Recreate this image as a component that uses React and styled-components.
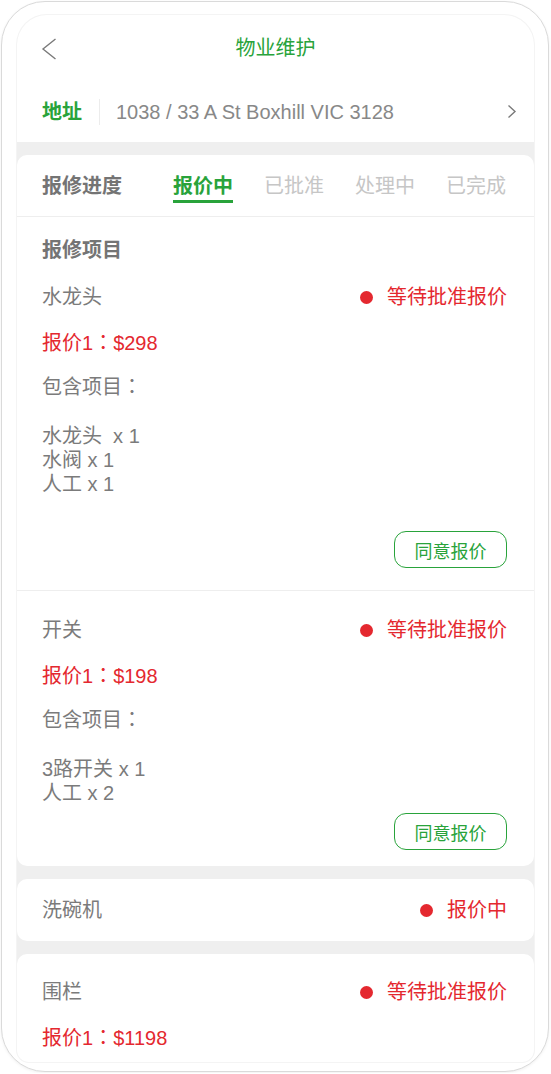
import styled, { createGlobalStyle } from "styled-components";

const GlobalStyle = createGlobalStyle`
    html, body {
        margin: 0;
        padding: 0;
        background: #ffffff;
    }
    body {
        font-family: "Liberation Sans", "Noto Sans CJK SC", sans-serif;
    }
    * {
        box-sizing: border-box;
    }
`;

const GREEN = "#29a33b";
const RED = "#e4282f";
const GREY = "#7b7b7b";

const Frame = styled.div`
    margin: 1px;
    width: 548px;
    height: 1071px;
    border: 1px solid #dadada;
    border-radius: 44px;
    box-shadow: 0 1px 3px rgba(0, 0, 0, 0.06);
    padding: 13px 14px 0 15px;
    background: #fff;
`;

const Screen = styled.div`
    width: 517px;
    height: 1047px;
    background: #efefef;
    border-radius: 30px 30px 12px 12px;
    box-shadow: 0 0 0 1px #f4f4f4;
    overflow: hidden;
`;

const Top = styled.div`
    background: #fff;
`;

const Header = styled.div`
    height: 66px;
    display: grid;
    grid-template-columns: 80px 1fr 80px;
    align-items: center;
`;

const Back = styled.div`
    padding-left: 24px;
    display: flex;
    align-items: center;
    margin-top: 1px;
`;

const Title = styled.div`
    text-align: center;
    color: ${GREEN};
    font-size: 20px;
    line-height: 24px;
`;

const AddressRow = styled.div`
    height: 61px;
    display: flex;
    align-items: center;
    padding: 0 17px 0 25px;
`;

const AddressLabel = styled.span`
    color: ${GREEN};
    font-weight: 700;
    font-size: 20px;
    line-height: 24px;
`;

const VLine = styled.div`
    width: 1px;
    height: 26px;
    background: #ececec;
    margin: 0 16px 0 17px;
`;

const AddressText = styled.span`
    flex: 1;
    color: #888;
    font-size: 20px;
    line-height: 24px;
`;

const Cards = styled.div`
    display: flex;
    flex-direction: column;
    gap: 13px;
    padding-top: 13px;
`;

const Card = styled.div`
    background: #fff;
    border-radius: 10px;
`;

const TabsRow = styled.div`
    height: 62px;
    display: flex;
    align-items: center;
    padding-left: 25px;
    border-bottom: 1px solid #eeeeee;
`;

const Heading = styled.span`
    color: #747474;
    font-weight: 700;
    font-size: 20px;
    line-height: 24px;
`;

const Tabs = styled.div`
    display: flex;
    gap: 31px;
    margin-left: 51px;
`;

const Tab = styled.span`
    position: relative;
    font-size: 20px;
    line-height: 24px;
    color: ${props => props.$active ? GREEN : "#c6c6c6"};
    font-weight: ${props => props.$active ? 700 : 400};

    &::after {
        content: "";
        display: ${props => props.$active ? "block" : "none"};
        position: absolute;
        left: 0;
        right: 0;
        top: 26px;
        height: 3px;
        background: ${GREEN};
    }
`;

const SectionTitle = styled.div`
    padding: 21px 25px 0;
`;

const Item = styled.div`
    padding: ${props => props.$top}px 27px ${props => props.$bottom}px 25px;
    border-bottom: ${props => props.$divider ? "1px solid #eeeeee" : "none"};
`;

const Row = styled.div`
    flex: 1;
    display: flex;
    align-items: center;
    justify-content: space-between;
    font-size: 20px;
    line-height: 24px;
`;

const Name = styled.span`
    color: ${GREY};
`;

const Status = styled.span`
    display: flex;
    align-items: center;
    gap: 14px;
    color: ${RED};
`;

const Dot = styled.span`
    width: 13px;
    height: 13px;
    border-radius: 50%;
    background: ${RED};
`;

const Quote = styled.div`
    margin-top: 22px;
    color: ${RED};
    font-size: 20px;
    line-height: 24px;
`;

const Included = styled.div`
    margin-top: 20px;
    color: ${GREY};
    font-size: 20px;
    line-height: 24px;
`;

// centred full-width colon, as in the reference font
const Colon = styled.span`
    font-family: "Noto Sans CJK TC", "Noto Sans CJK SC", sans-serif;
    line-height: 0;
`;

const Lines = styled.div`
    margin-top: 25px;
    color: ${GREY};
    font-size: 20px;
    line-height: 24px;
    white-space: pre;
`;

const Actions = styled.div`
    display: flex;
    justify-content: flex-end;
    margin-top: ${props => props.$gap}px;
`;

const AgreeButton = styled.button`
    width: 113px;
    height: 37px;
    border: 1px solid ${GREEN};
    border-radius: 12px;
    background: #fff;
    color: ${GREEN};
    font-family: inherit;
    font-size: 18px;
    padding: 0;
    cursor: pointer;
`;

const ShortCard = styled(Card)`
    height: 62px;
    padding: 0 27px 0 25px;
    display: flex;
    align-items: center;
`;

const BackIcon = () => (
    <svg width="16" height="22" viewBox="0 0 16 22">
        <polyline points="14.5,1 2,11 14.5,21" fill="none" stroke="#7a7a7a" strokeWidth="1.4" />
    </svg>
);

const NextIcon = () => (
    <svg width="10" height="15" viewBox="0 0 10 15">
        <polyline points="1.5,1.5 8,7.5 1.5,13.5" fill="none" stroke="#7a7a7a" strokeWidth="1.4" />
    </svg>
);

const StatusTag = ({ text }) => (
    <Status>
        <Dot />
        {text}
    </Status>
);

const QuoteLine = ({ price }) => (
    <Quote>报价1<Colon>：</Colon>${price}</Quote>
);

const App = () => {
    return (
        <>
            <GlobalStyle />
            <Frame>
                <Screen>
                    <Top>
                        <Header>
                            <Back><BackIcon /></Back>
                            <Title>物业维护</Title>
                            <div />
                        </Header>
                        <AddressRow>
                            <AddressLabel>地址</AddressLabel>
                            <VLine />
                            <AddressText>1038 / 33 A St Boxhill VIC 3128</AddressText>
                            <NextIcon />
                        </AddressRow>
                    </Top>

                    <Cards>
                        <Card>
                            <TabsRow>
                                <Heading>报修进度</Heading>
                                <Tabs>
                                    <Tab $active>报价中</Tab>
                                    <Tab>已批准</Tab>
                                    <Tab>处理中</Tab>
                                    <Tab>已完成</Tab>
                                </Tabs>
                            </TabsRow>
                            <SectionTitle>
                                <Heading>报修项目</Heading>
                            </SectionTitle>

                            <Item $top={23} $bottom={22} $divider>
                                <Row>
                                    <Name>水龙头</Name>
                                    <StatusTag text="等待批准报价" />
                                </Row>
                                <QuoteLine price="298" />
                                <Included>包含项目<Colon>：</Colon></Included>
                                <Lines>{"水龙头  x 1\n水阀 x 1\n人工 x 1"}</Lines>
                                <Actions $gap={35}>
                                    <AgreeButton>同意报价</AgreeButton>
                                </Actions>
                            </Item>

                            <Item $top={27} $bottom={16}>
                                <Row>
                                    <Name>开关</Name>
                                    <StatusTag text="等待批准报价" />
                                </Row>
                                <QuoteLine price="198" />
                                <Included>包含项目<Colon>：</Colon></Included>
                                <Lines>{"3路开关 x 1\n人工 x 2"}</Lines>
                                <Actions $gap={8}>
                                    <AgreeButton>同意报价</AgreeButton>
                                </Actions>
                            </Item>
                        </Card>

                        <ShortCard>
                            <Row>
                                <Name>洗碗机</Name>
                                <StatusTag text="报价中" />
                            </Row>
                        </ShortCard>

                        <Card>
                            <Item $top={26} $bottom={24}>
                                <Row>
                                    <Name>围栏</Name>
                                    <StatusTag text="等待批准报价" />
                                </Row>
                                <QuoteLine price="1198" />
                            </Item>
                        </Card>
                    </Cards>
                </Screen>
            </Frame>
        </>
    );
};

export default App;
